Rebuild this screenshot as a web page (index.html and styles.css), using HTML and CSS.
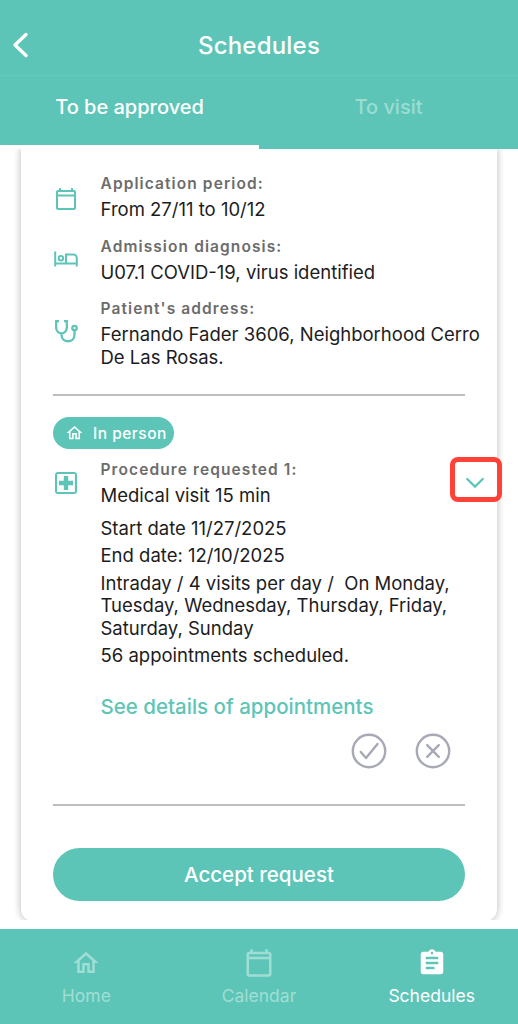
FILE: index.html
```html
<!DOCTYPE html>
<html lang="en">
<head>
<meta charset="utf-8">
<meta name="viewport" content="width=device-width, initial-scale=1">
<title>Schedules</title>
<link rel="stylesheet" href="styles.css">
</head>
<body>
<div class="app">
  <header class="header">
    <svg class="back" viewBox="0 0 18 28" aria-label="Back"><path d="M15 3.5 4 14l11 10.500"/></svg>
    <h1 class="title">Schedules</h1>
  </header>
  <nav class="tabs">
    <a class="tab active"><span>To be approved</span></a>
    <a class="tab visit"><span>To visit</span></a>
  </nav>
  <main class="content">
    <section class="card">
      <div class="row">
        <svg class="icon" viewBox="0 0 24 24"><path d="M20 3h-1V1h-2v2H7V1H5v2H4c-1.100 0-2 .9-2 2v16c0 1.100.9 2 2 2h16c1.100 0 2-.9 2-2V5c0-1.100-.9-2-2-2zm0 18H4V9.500h16V21zm0-13.500H4V5h16v2.500z"/></svg>
        <div><p class="label l1">Application period:</p><p class="value v1">From 27/11 to 10/12</p></div>
      </div>
      <div class="row">
        <svg class="icon bed" viewBox="0 0 24 24"><path d="M1.200 4.500v15M1.200 16.500h21.600M22.800 19.500V11a3.500 3.500 0 0 0-3.500-3.500H12v9"/><circle cx="6.900" cy="11.300" r="2.200"/></svg>
        <div><p class="label l2">Admission diagnosis:</p><p class="value v2">U07.1 COVID-19, virus identified</p></div>
      </div>
      <div class="row address">
        <svg class="icon steth" viewBox="0 0 24 24"><path d="M5 2.200H2.200V9a5.300 5.300 0 0 0 10.600 0V2.200H10M7.500 14.300v1.200c0 9 13 9 13 0v-4"/><circle cx="20.500" cy="9" r="2.200"/></svg>
        <div><p class="label l3">Patient's address:</p><p class="value"><span class="v3">Fernando Fader 3606, Neighborhood Cerro</span><br><span class="v4">De Las Rosas.</span></p></div>
      </div>
      <hr class="rule">
      <div class="chip">
        <svg viewBox="0 0 24 24"><path d="m12 5.700 5 4.500V18h-2v-6H9v6H7v-7.800l5-4.500M12 3 2 12h3v8h6v-6h2v6h6v-8h3L12 3z"/></svg>
        <span>In person</span>
      </div>
      <div class="procedure">
        <svg class="icon" viewBox="0 0 24 24"><path d="M20 1H4a3 3 0 0 0-3 3v16a3 3 0 0 0 3 3h16a3 3 0 0 0 3-3V4a3 3 0 0 0-3-3zm.9 19.900H3.100V3.100h17.800zM9.800 19h4.400v-4.800H19V9.800h-4.800V5H9.800v4.800H5v4.400h4.800z"/></svg>
        <div class="details">
          <p class="label l4">Procedure requested 1:</p>
          <p class="value v5">Medical visit 15 min</p>
          <p class="value v6">Start date 11/27/2025</p>
          <p class="value v7">End date: 12/10/2025</p>
          <p class="value freq"><span class="v8">Intraday / 4 visits per day /&nbsp; On Monday,</span><br><span class="v9">Tuesday, Wednesday, Thursday, Friday,</span><br><span class="v10">Saturday, Sunday</span></p>
          <p class="value v11">56 appointments scheduled.</p>
        </div>
        <button class="toggle" aria-label="Collapse"><svg viewBox="0 0 20 12"><path d="m2.200 2 7.800 7.600L17.800 2"/></svg></button>
      </div>
      <a class="link">See details of appointments</a>
      <div class="actions">
        <svg viewBox="0 0 36 36"><circle cx="18" cy="18" r="16.200"/><path d="m9.800 19 5.200 6L26.500 11"/></svg>
        <svg viewBox="0 0 36 36"><circle cx="18" cy="18" r="16.200"/><path d="m12.200 12.200 11.600 11.600M23.800 12.200 12.200 23.800"/></svg>
      </div>
      <hr class="rule">
      <button class="accept"><span>Accept request</span></button>
    </section>
  </main>
  <nav class="bottom">
    <a class="item home"><svg viewBox="0 0 24 24"><path d="m12 5.700 5 4.500V18h-2v-6H9v6H7v-7.800l5-4.500M12 3 2 12h3v8h6v-6h2v6h6v-8h3L12 3z"/></svg><span>Home</span></a>
    <a class="item cal"><svg viewBox="0 0 24 24"><path d="M20 3h-1V1h-2v2H7V1H5v2H4c-1.100 0-2 .9-2 2v16c0 1.100.9 2 2 2h16c1.100 0 2-.9 2-2V5c0-1.100-.9-2-2-2zm0 18H4V9h16v12zm0-14H4V5h16v2z"/></svg><span>Calendar</span></a>
    <a class="item sched"><svg viewBox="0 0 24 24"><path d="M19 3h-4.180C14.400 1.840 13.300 1 12 1c-1.300 0-2.400.84-2.820 2H5c-1.100 0-2 .9-2 2v14c0 1.100.9 2 2 2h14c1.100 0 2-.9 2-2V5c0-1.100-.9-2-2-2zm-7 0c.55 0 1 .45 1 1s-.45 1-1 1-1-.45-1-1 .45-1 1-1zm2 14H7v-2h7v2zm3-4H7v-2h10v2zm0-4H7V7h10v2z"/></svg><span>Schedules</span></a>
  </nav>
</div>
</body>
</html>
```
FILE: styles.css
```css
* { box-sizing: border-box; }
body { margin: 0; background: #fff; font-family: Inter, "Liberation Sans", sans-serif; }
p, h1 { margin: 0; }
button { border: 0; padding: 0; background: none; font: inherit; }
.app { width: 518px; height: 1024px; display: flex; flex-direction: column; overflow: hidden; }

.header { flex: none; height: 76px; display: grid; grid-template-columns: 40px 1fr 40px; padding-top: 30px; background: #5dc5b7; border-bottom: 1px solid #65c8bb; }
.back { width: 18px; height: 28px; margin: 1px 0 0 11px; fill: none; stroke: #fff; stroke-width: 3.4; stroke-linecap: round; stroke-linejoin: round; }
.title { color: #fff; font-size: 24px; line-height: 32px; font-weight: 500; text-align: center; letter-spacing: .2px; }
.tabs { flex: none; height: 73px; display: grid; grid-template-columns: 1fr 1fr; background: #5dc5b7; }
.tab { padding-top: 16px; text-align: center; color: #9bdcd3; font-size: 20px; line-height: 30px; font-weight: 500; }
.tab.active { color: #fff; border-bottom: 4px solid #fff; }

.content { flex: none; height: 771px; padding: 0 21px; overflow: hidden; }
.card { height: 772px; padding: 24px 32px 0; background: #fff; border-radius: 0 0 12px 12px; box-shadow: 0 0 7px 1px rgba(0,0,0,.23); }
.row { display: grid; grid-template-columns: 47.500px 1fr; height: 62.500px; }
.row.address { height: 96px; }
.icon { width: 24px; height: 24px; margin: 14px 0 0 1px; fill: #5dc5b7; }
.bed, .steth { fill: none; stroke: #5dc5b7; stroke-width: 2; }
.bed { margin-top: 11px; }
.steth { margin-top: 21px; stroke-width: 2.300; }
.label { color: #6c6c6c; font-size: 15.500px; line-height: 22px; font-weight: 600; letter-spacing: 1.100px; white-space: nowrap; }
.value { margin-top: 3px; color: #1c1c1e; font-size: 18.500px; line-height: 22.500px; white-space: nowrap; }
.rule { height: 2px; margin: 0; border: 0; background: #bdbdbd; }
.chip { display: flex; align-items: center; gap: 9px; width: 121px; height: 32px; margin-top: 21px; padding-left: 12px; border-radius: 16px; background: #5dc5b7; color: #fff; font-size: 15.500px; font-weight: 500; letter-spacing: .5px; white-space: nowrap; }
.chip svg { width: 19px; height: 20px; fill: #fff; }
.procedure { display: grid; grid-template-columns: 47.500px 1fr 52px; margin: 10px -15px 0 0; }
.procedure .icon { margin-top: 12px; }
.v6 { margin-top: 10px; }
.v7, .freq, .v11 { margin-top: 5px; }
.toggle { display: flex; justify-content: center; align-items: center; width: 52px; height: 45px; margin-top: -2px; padding: 6px 2px 0 0; border: 5px solid #ff4238; border-radius: 8px; }
.toggle svg { width: 20px; height: 12px; fill: none; stroke: #5dc5b7; stroke-width: 2.300; stroke-linecap: round; }
.link { display: block; margin: 26px 0 0 47.500px; color: #5dc5b7; font-size: 20.500px; line-height: 28px; font-weight: 500; white-space: nowrap; }
.actions { display: flex; justify-content: flex-end; gap: 28px; height: 36px; margin: 12px 14px 35px 0; }
.actions svg { width: 36px; height: 36px; fill: none; stroke: #a7a9b5; stroke-width: 2.400; stroke-linecap: round; stroke-linejoin: round; }
.accept { display: block; width: 412px; height: 53px; margin-top: 42px; border-radius: 27px; background: #5dc5b7; color: #fff; font-size: 20.500px; font-weight: 500; }

.bottom { flex: none; height: 95px; margin-top: 9px; display: grid; grid-template-columns: repeat(3, 1fr); background: #5dc5b7; }
.item { display: flex; flex-direction: column; align-items: center; color: #a0ded5; font-size: 17.500px; line-height: 22px; }
.item svg { width: 30px; height: 30px; margin: 19px 0 7px; fill: currentColor; }
.sched { color: #fff; }
```
